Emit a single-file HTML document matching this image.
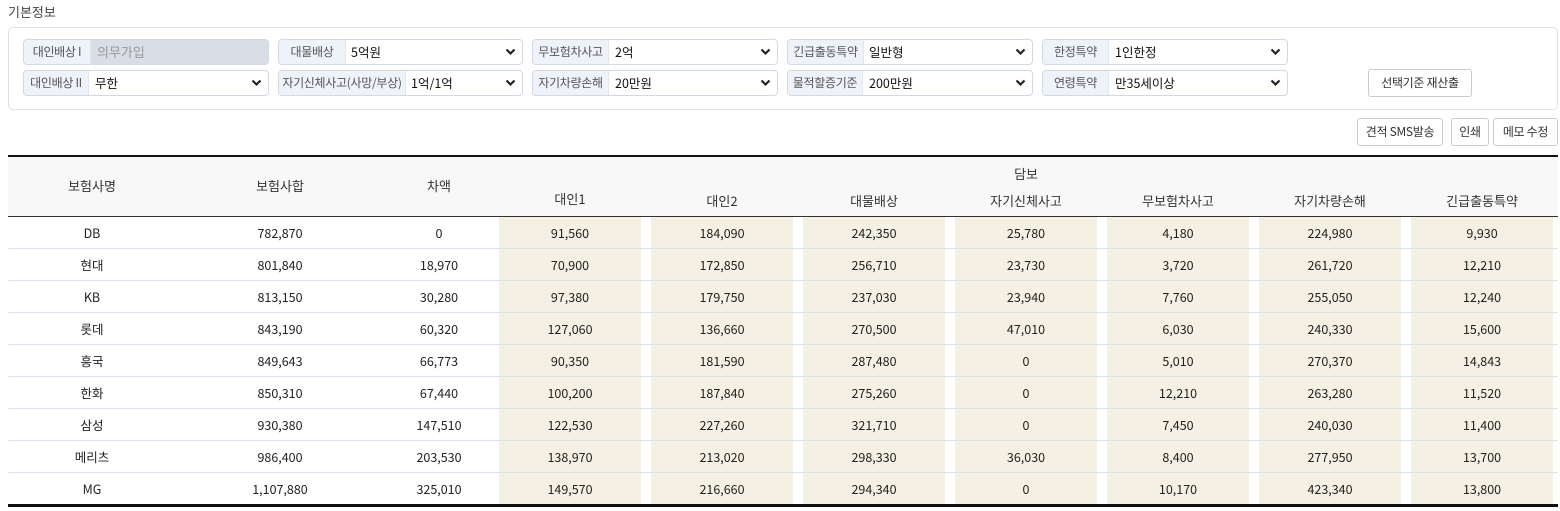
<!DOCTYPE html>
<html><head><meta charset="utf-8"><style>
*{box-sizing:border-box;margin:0;padding:0}
body{width:1560px;height:511px;background:#fff;font-family:"Noto Sans CJK KR","Liberation Sans",sans-serif;position:relative;overflow:hidden;color:#222}
.title{position:absolute;left:8px;top:2px;font-size:13px;line-height:20px;color:#444}
.box{position:absolute;left:8px;top:27px;width:1550px;height:83px;border:1px solid #dde1e8;border-radius:5px}
.g{position:absolute;height:26px;border:1px solid #d3d9e3;border-radius:4px;background:#fff;overflow:hidden;font-size:12.5px}
.g .l{position:absolute;left:0;top:0;bottom:0;background:#eef2f9;color:#555;font-size:12px;line-height:24px;text-align:center;border-right:1px solid #e2e7ef;white-space:nowrap;letter-spacing:-0.3px}
.g .v{position:absolute;top:0;line-height:24px;color:#111}
.g svg{position:absolute;right:6px;top:8px}
.g.dis{background:#d9dde6}
.g.dis .v{color:#999;font-size:13px}
.btn{position:absolute;border:1px solid #c8ccd3;border-radius:3px;background:#fff;font-size:12px;color:#333;text-align:center;white-space:nowrap;letter-spacing:-0.3px}
table{position:absolute;left:8px;top:155px;width:1550px;border-collapse:collapse;table-layout:fixed;font-size:12.5px;color:#222}
th{font-weight:normal;background:#f8f8f8;color:#333;font-size:13px;line-height:18px}
td{text-align:center;height:32px;border-bottom:1px solid #d8e0ec;padding:0;line-height:31px}
td.b{padding:0 5px 0 5px}
td.b div{background:#f4f0e3;height:31px;line-height:31px}
</style></head><body>
<div class="title">기본정보</div>
<div class="box"></div>

<div class="g dis" style="left:23px;top:39px;width:246px"><div class="l" style="width:67px">대인배상 I</div><div class="v" style="left:73px">의무가입</div></div>
<div class="g" style="left:23px;top:70px;width:246px"><div class="l" style="width:65px">대인배상 II</div><div class="v" style="left:71px">무한</div><svg width="11" height="8" viewBox="0 0 11 8"><path d="M1.5 1.5L5.5 5.5L9.5 1.5" stroke="#222" stroke-width="2.2" fill="none"/></svg></div>

<div class="g" style="left:278px;top:39px;width:245px"><div class="l" style="width:67px">대물배상</div><div class="v" style="left:72px">5억원</div><svg width="11" height="8" viewBox="0 0 11 8"><path d="M1.5 1.5L5.5 5.5L9.5 1.5" stroke="#222" stroke-width="2.2" fill="none"/></svg></div>
<div class="g" style="left:278px;top:70px;width:245px"><div class="l" style="width:127px">자기신체사고(사망/부상)</div><div class="v" style="left:132px">1억/1억</div><svg width="11" height="8" viewBox="0 0 11 8"><path d="M1.5 1.5L5.5 5.5L9.5 1.5" stroke="#222" stroke-width="2.2" fill="none"/></svg></div>

<div class="g" style="left:532px;top:39px;width:246px"><div class="l" style="width:76px">무보험차사고</div><div class="v" style="left:82px">2억</div><svg width="11" height="8" viewBox="0 0 11 8"><path d="M1.5 1.5L5.5 5.5L9.5 1.5" stroke="#222" stroke-width="2.2" fill="none"/></svg></div>
<div class="g" style="left:532px;top:70px;width:246px"><div class="l" style="width:76px">자기차량손해</div><div class="v" style="left:82px">20만원</div><svg width="11" height="8" viewBox="0 0 11 8"><path d="M1.5 1.5L5.5 5.5L9.5 1.5" stroke="#222" stroke-width="2.2" fill="none"/></svg></div>

<div class="g" style="left:787px;top:39px;width:246px"><div class="l" style="width:76px">긴급출동특약</div><div class="v" style="left:81px">일반형</div><svg width="11" height="8" viewBox="0 0 11 8"><path d="M1.5 1.5L5.5 5.5L9.5 1.5" stroke="#222" stroke-width="2.2" fill="none"/></svg></div>
<div class="g" style="left:787px;top:70px;width:246px"><div class="l" style="width:75px">물적할증기준</div><div class="v" style="left:81px">200만원</div><svg width="11" height="8" viewBox="0 0 11 8"><path d="M1.5 1.5L5.5 5.5L9.5 1.5" stroke="#222" stroke-width="2.2" fill="none"/></svg></div>

<div class="g" style="left:1042px;top:39px;width:246px"><div class="l" style="width:66px">한정특약</div><div class="v" style="left:72px">1인한정</div><svg width="11" height="8" viewBox="0 0 11 8"><path d="M1.5 1.5L5.5 5.5L9.5 1.5" stroke="#222" stroke-width="2.2" fill="none"/></svg></div>
<div class="g" style="left:1042px;top:70px;width:246px"><div class="l" style="width:66px">연령특약</div><div class="v" style="left:72px">만35세이상</div><svg width="11" height="8" viewBox="0 0 11 8"><path d="M1.5 1.5L5.5 5.5L9.5 1.5" stroke="#222" stroke-width="2.2" fill="none"/></svg></div>

<div class="btn" style="left:1368px;top:69px;width:104px;height:28px;line-height:26px">선택기준 재산출</div>
<div class="btn" style="left:1357px;top:118px;width:86px;height:28px;line-height:26px">견적 SMS발송</div>
<div class="btn" style="left:1451px;top:118px;width:38px;height:28px;line-height:26px">인쇄</div>
<div class="btn" style="left:1493px;top:118px;width:65px;height:28px;line-height:26px">메모 수정</div>

<table>
<colgroup><col style="width:168px"><col style="width:208px"><col style="width:110px"><col style="width:152px"><col style="width:152px"><col style="width:152px"><col style="width:152px"><col style="width:152px"><col style="width:152px"><col style="width:152px"></colgroup>
<thead>
<tr style="border-top:2px solid #111"><th rowspan="2" style="height:60px">보험사명</th><th rowspan="2">보험사합</th><th rowspan="2">차액</th><th colspan="7" style="height:31px;padding-top:4px">담보</th></tr>
<tr style="border-bottom:1px solid #333"><th style="height:29px;padding-bottom:4px">대인1</th><th>대인2</th><th>대물배상</th><th>자기신체사고</th><th>무보험차사고</th><th>자기차량손해</th><th>긴급출동특약</th></tr>
</thead>
<tbody>
<tr><td>DB</td><td>782,870</td><td>0</td><td class="b"><div>91,560</div></td><td class="b"><div>184,090</div></td><td class="b"><div>242,350</div></td><td class="b"><div>25,780</div></td><td class="b"><div>4,180</div></td><td class="b"><div>224,980</div></td><td class="b"><div>9,930</div></td></tr>
<tr><td>현대</td><td>801,840</td><td>18,970</td><td class="b"><div>70,900</div></td><td class="b"><div>172,850</div></td><td class="b"><div>256,710</div></td><td class="b"><div>23,730</div></td><td class="b"><div>3,720</div></td><td class="b"><div>261,720</div></td><td class="b"><div>12,210</div></td></tr>
<tr><td>KB</td><td>813,150</td><td>30,280</td><td class="b"><div>97,380</div></td><td class="b"><div>179,750</div></td><td class="b"><div>237,030</div></td><td class="b"><div>23,940</div></td><td class="b"><div>7,760</div></td><td class="b"><div>255,050</div></td><td class="b"><div>12,240</div></td></tr>
<tr><td>롯데</td><td>843,190</td><td>60,320</td><td class="b"><div>127,060</div></td><td class="b"><div>136,660</div></td><td class="b"><div>270,500</div></td><td class="b"><div>47,010</div></td><td class="b"><div>6,030</div></td><td class="b"><div>240,330</div></td><td class="b"><div>15,600</div></td></tr>
<tr><td>흥국</td><td>849,643</td><td>66,773</td><td class="b"><div>90,350</div></td><td class="b"><div>181,590</div></td><td class="b"><div>287,480</div></td><td class="b"><div>0</div></td><td class="b"><div>5,010</div></td><td class="b"><div>270,370</div></td><td class="b"><div>14,843</div></td></tr>
<tr><td>한화</td><td>850,310</td><td>67,440</td><td class="b"><div>100,200</div></td><td class="b"><div>187,840</div></td><td class="b"><div>275,260</div></td><td class="b"><div>0</div></td><td class="b"><div>12,210</div></td><td class="b"><div>263,280</div></td><td class="b"><div>11,520</div></td></tr>
<tr><td>삼성</td><td>930,380</td><td>147,510</td><td class="b"><div>122,530</div></td><td class="b"><div>227,260</div></td><td class="b"><div>321,710</div></td><td class="b"><div>0</div></td><td class="b"><div>7,450</div></td><td class="b"><div>240,030</div></td><td class="b"><div>11,400</div></td></tr>
<tr><td>메리츠</td><td>986,400</td><td>203,530</td><td class="b"><div>138,970</div></td><td class="b"><div>213,020</div></td><td class="b"><div>298,330</div></td><td class="b"><div>36,030</div></td><td class="b"><div>8,400</div></td><td class="b"><div>277,950</div></td><td class="b"><div>13,700</div></td></tr>
<tr style="border-bottom:3px solid #111"><td>MG</td><td>1,107,880</td><td>325,010</td><td class="b"><div>149,570</div></td><td class="b"><div>216,660</div></td><td class="b"><div>294,340</div></td><td class="b"><div>0</div></td><td class="b"><div>10,170</div></td><td class="b"><div>423,340</div></td><td class="b"><div>13,800</div></td></tr>
</tbody></table>
</body></html>
